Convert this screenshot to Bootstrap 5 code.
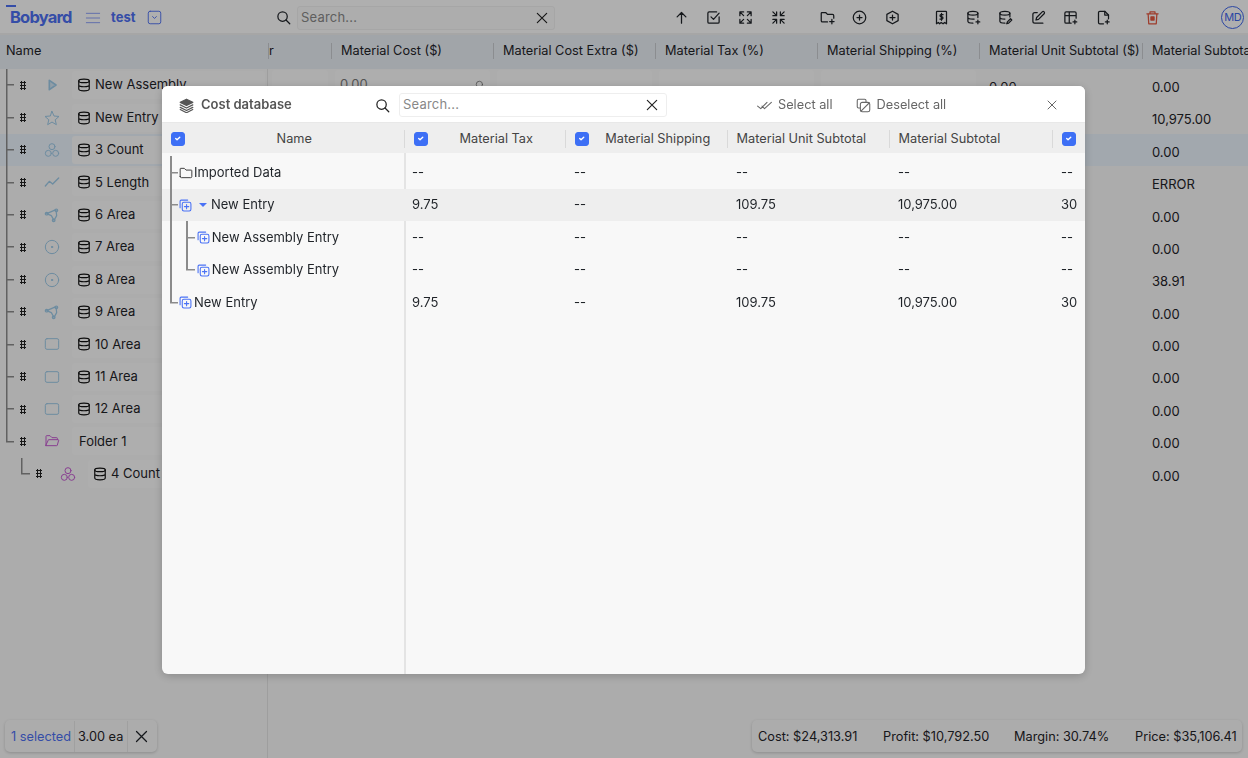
<!DOCTYPE html>
<html lang="en"><head><meta charset="utf-8"><title>Cost database</title>
<link href="https://cdn.jsdelivr.net/npm/bootstrap@5.3.0/dist/css/bootstrap.min.css" rel="stylesheet">
<style>
html,body{height:100%;overflow:hidden}
body{font-family:Inter,"Liberation Sans",sans-serif;font-size:13px;color:#1f2328;background:#f6f6f6}
.ic{width:16px;height:16px;fill:none;stroke:currentColor;stroke-width:2;stroke-linecap:round;stroke-linejoin:round;flex:none}
.page{height:758px;width:1248px;background:linear-gradient(#e2e2e2,#e2e2e2) 267px 0/1px 100% no-repeat #f6f6f6}
.topbar{height:35px;background:#fbfbfb;border-bottom:2px solid #eee;padding:2px 0 0 10px;flex:none}
.logo{font-weight:700;font-size:16.5px;letter-spacing:-.8px;color:#4d6ff0;width:75px;position:relative}
.logo i{position:absolute;left:-4px;top:0;width:10px;height:2px;background:#4d6ff0}
.menu-ic{color:#8d9ff5;margin-right:10px}
.proj{font-weight:700;color:#4d6ff0;width:36px}
.caretbox{color:#4d6ff0;width:15px;height:15px}
.sr-ic{width:15px;height:15px}
.top-s{margin-left:114px;margin-right:6px}
.sbox{background:#fff;border:1px solid #eee;border-radius:3px;height:24px;padding:0 4px 0 3px;color:#888}
.sbox .ph{flex:1;letter-spacing:.2px}
.sbox .ic{color:#222;width:14px;height:14px;margin-right:1px}
.top-in{width:258px;background:#f8f8f8;margin-right:110px;padding-right:4px}
.tool{width:32.4px;display:flex;justify-content:center}
.tool .ic{width:15px;height:15px}
.tgap{margin-left:16.6px}
.trash{color:#e2573f}
.avatar{width:23px;height:23px;border:1.8px solid #3f66ea;border-radius:50%;color:#3f66ea;font-size:11px;letter-spacing:-.4px;margin-left:53px;display:flex;align-items:center;justify-content:center}
.ghead,.grow-r{display:grid;grid-template-columns:268px 63px 162px 162px 162px 162px 163px 110px;width:1254px}
.ghead{height:34px;background:#e7edf3;align-items:center;padding-bottom:2px;font-size:12.75px}
.ghead>div{padding-left:9px;white-space:nowrap;overflow:hidden;position:relative;line-height:16px;border-left:1px solid #c8cbcf}
.ghead>div:first-child{padding-left:6px;border:0}
.ghead>div:nth-child(2){padding-left:0}
.tree{flex:1}
.grow-r{height:32.4px;align-items:center}
.grow-r.hl{background:#e8f1fa}
.ncell{display:flex;align-items:center;height:100%;overflow:hidden;padding-left:6px}
.twg{width:8px;height:100%;flex:none;background:linear-gradient(#8b8b8b,#8b8b8b) 0 0/1.5px 100% no-repeat,linear-gradient(#8b8b8b,#8b8b8b) 0 50%/100% 1.5px no-repeat}
.twg.end{background:linear-gradient(#8b8b8b,#8b8b8b) 0 0/1.5px 50% no-repeat,linear-gradient(#8b8b8b,#8b8b8b) 0 50%/100% 1.5px no-repeat}
.twg.nest{margin-left:15px;width:9px}
.hnd{width:6px;height:9px;margin-left:6px;flex:none;background:radial-gradient(circle,#222 1.1px,transparent 1.3px) 0 0/3px 3px}
.kind{margin-left:18px;margin-right:12px;color:#9dc9e6}
.kind.pur{color:#c45bd0}
.box{flex:1;height:28px;background:#f9f9f9;border-radius:3px;display:flex;align-items:center;padding-left:5px;margin-right:3px;gap:4px;white-space:nowrap;overflow:hidden}
.box .ic{width:14px;height:14px;stroke-width:2;color:#111}
.box.fl{padding-left:7px}
.inp{height:30px;background:#f9f9f9;border-radius:3px;margin:0 3px 0 4px;padding:0 5px;color:#777;display:flex;align-items:center;justify-content:space-between}
.vcell,.c8{padding:5px 0 0 10px}
.c8{grid-column:8}
.foot{height:38px;padding:0 6px 6px 5px;font-size:12.75px}
.pill{height:32px;background:#f7f7f7;border-radius:5px;box-shadow:0 1px 3px rgba(0,0,0,.18);white-space:nowrap;padding-top:1px}
.sel{width:152px;padding-left:6px}
.sel .blu{color:#4d6ff0;line-height:31px;border-right:1px solid #e6e6e6;width:64px}
.sel .qty{padding:0 3px;line-height:31px;border-right:1px solid #e6e6e6;width:53px}
.sel .ic{margin-left:6px;width:15px;height:15px}
.tot{padding-left:6px;width:490px}
.tot .a{width:125px}.tot .b{width:131px}.tot .c{width:121px}
.modal-backdrop{--bs-backdrop-opacity:.3;--bs-backdrop-bg:#000}
.cdlg{max-width:none;width:923px;margin:86px 0 0 162px}
.cdlg .modal-content{height:588px;background:#f8f8f8;border:0;border-radius:6px;overflow:hidden;box-shadow:0 2px 10px rgba(0,0,0,.2)}
.mh{height:37px;background:#fff;border-bottom:1px solid #e8e8e8;padding:2px 0 0 17px;flex:none}
.mh .st{font-weight:600;color:#555;margin-left:7px;width:174px}
.mh .lay{width:15px;height:15px;color:#555}
.mh .sr-ic{margin-right:9px;color:#222}
.m-in{width:268px;margin-right:90px;height:24px}
.mact{color:#666;gap:6px;display:flex;align-items:center;font-size:12.75px}
.mact.one{margin-right:23px}
.mact .ic{width:15px;height:15px;stroke-width:1.7}
.mx{color:#555;width:12px;height:12px;margin-left:100px;stroke-width:1.8}
.mg,.mr{display:grid;flex:none}
.mg{grid-template-columns:242px 161px 162px 162px 163px 33px;height:30px;padding-top:1px;background:#eee;align-items:center;color:#444;font-size:12.75px}
.mr{grid-template-columns:243px 162px 162px 162px 163px 31px}
.mg>div{display:flex;align-items:center;height:18px;border-left:1px solid #d9d9d9;padding-left:8.5px;white-space:nowrap}
.mg>div:first-child{border:0}
.mg .ctr{flex:1;text-align:center}
.form-check-input.ck{width:14px;height:14px;margin:0;flex:none;background-color:#3d6ff5;border-color:#3d6ff5;border-radius:3px;background-size:75%}
.mbody{flex:1;background:linear-gradient(#e4e4e4,#e4e4e4) 242px 0/2px 100% no-repeat;padding-top:3.4px}
.mr{height:32.5px;align-items:center}
.mr.on{background:#eeeeee}
.mr>div{padding-left:7px;white-space:nowrap}
.mr>.mn{padding-left:8px;display:flex;align-items:center;height:100%;margin:0}
.mn .twg{width:9.2px;background-size:2px 100%,8px 1.5px}
.mn .twg.end{background-size:2px 50%,8px 1.5px}
.mn .twg.nest{margin-left:6.8px;width:11px;background-size:2px 100%,9px 1.5px}
.mn .twg.nest.end{background-size:2px 50%,9px 1.5px}
.mn .twg.pass{background-size:2px 100%,0 0}
.blue-i{color:#4a72f5;width:13px;height:13px;stroke-width:2;margin-right:1.8px}
.fold-i{color:#333;width:14px;height:14px;stroke-width:1.6;margin-right:.8px}
.tri{width:0;height:0;border-left:4.500px solid transparent;border-right:4.500px solid transparent;border-top:4.500px solid #4a72f5;margin:0 4px 0 5px}
</style></head><body>
<svg width="0" height="0" class="position-absolute"><defs>
<symbol id="search" viewBox="0 0 24 24"><circle cx="10.5" cy="10.5" r="7.5"/><path d="M16 16l6 6"/></symbol>
<symbol id="x" viewBox="0 0 24 24"><path d="M4 4l16 16M20 4L4 20"/></symbol>
<symbol id="menu" viewBox="0 0 24 24"><path d="M2 5h20M2 12h20M2 19h20"/></symbol>
<symbol id="cbox" viewBox="0 0 24 24"><rect x="2" y="2" width="20" height="20" rx="3"/><path d="M9 10.5l3 3 3-3"/></symbol>
<symbol id="up" viewBox="0 0 24 24"><path d="M12 21V4M5 11l7-7 7 7"/></symbol>
<symbol id="chk" viewBox="0 0 24 24"><path d="M21 11v8a2 2 0 0 1-2 2H5a2 2 0 0 1-2-2V5a2 2 0 0 1 2-2h12"/><path d="M8 11l4 4 9-10"/></symbol>
<symbol id="exp" viewBox="0 0 24 24"><path d="M3 9V3h6M3 3l6 6M21 9V3h-6M21 3l-6 6M3 15v6h6M3 21l6-6M21 15v6h-6M21 21l-6-6"/></symbol>
<symbol id="col" viewBox="0 0 24 24"><path d="M3 3l6 6M9 3v6H3M21 3l-6 6M15 3v6h6M3 21l6-6M9 21v-6H3M21 21l-6-6M15 21v-6h6"/></symbol>
<symbol id="fplus" viewBox="0 0 24 24"><path d="M12 19H4a2 2 0 0 1-2-2V5a1 1 0 0 1 1-1h6l3 3h8a2 2 0 0 1 2 2v4"/><path d="M19 15v7M15.5 18.5h7"/></symbol>
<symbol id="cplus" viewBox="0 0 24 24"><circle cx="12" cy="12" r="10"/><path d="M12 8v8M8 12h8"/></symbol>
<symbol id="hplus" viewBox="0 0 24 24"><path d="M12 2l9 5v10l-9 5-9-5V7z"/><path d="M12 8v8M8 12h8"/></symbol>
<symbol id="rcpt" viewBox="0 0 24 24"><path d="M4 22V3a1 1 0 0 1 1-1h14a1 1 0 0 1 1 1v19l-3-2-2.500 2-3-2-2.500 2-2-2z"/><path d="M14.500 7.500H11a1.800 1.800 0 0 0 0 3.500h2a1.800 1.800 0 0 1 0 3.500H9.500M12 5.500v11"/></symbol>
<symbol id="dbp" viewBox="0 0 24 24"><ellipse cx="11" cy="5" rx="8" ry="3"/><path d="M3 5v13c0 1.700 3.500 3 8 3M19 5v7M3 11.500c0 1.700 3.500 3 8 3h2M19 16v6M16 19h6"/></symbol>
<symbol id="dbe" viewBox="0 0 24 24"><ellipse cx="11" cy="5" rx="8" ry="3"/><path d="M3 5v13c0 1.700 3.500 3 8 3M19 5v6M3 11.500c0 1.700 3.500 3 8 3M14 22l1-3 5-5 2 2-5 5z"/></symbol>
<symbol id="pen" viewBox="0 0 24 24"><path d="M10 4H6a3 3 0 0 0-3 3v11a3 3 0 0 0 3 3h13"/><path d="M8 16l1-4 9-9a2 2 0 0 1 3 3l-9 9z"/></symbol>
<symbol id="tplus" viewBox="0 0 24 24"><path d="M13 21H5a2 2 0 0 1-2-2V5a2 2 0 0 1 2-2h14a2 2 0 0 1 2 2v8M3 9h18M10 3v18"/><path d="M19 16v6M16 19h6"/></symbol>
<symbol id="dplus" viewBox="0 0 24 24"><path d="M12 22H6a2 2 0 0 1-2-2V4a2 2 0 0 1 2-2h8l6 6v6"/><path d="M14 2v6h6M18 16v6M15 19h6"/></symbol>
<symbol id="trash" viewBox="0 0 24 24"><path d="M3 6h18M8 6V3h8v3M5 6l1 16h12l1-16"/><rect x="9.500" y="11" width="5" height="5" fill="currentColor"/></symbol>
<symbol id="db" viewBox="0 0 24 24"><ellipse cx="12" cy="5" rx="9" ry="3"/><path d="M3 5v14c0 1.700 4 3 9 3s9-1.300 9-3V5M3 12c0 1.700 4 3 9 3s9-1.300 9-3"/></symbol>
<symbol id="tri" viewBox="0 0 24 24"><path d="M8 5l10 7-10 7z" fill="currentColor" fill-opacity=".4" stroke-width="2.500"/></symbol>
<symbol id="star" viewBox="0 0 24 24"><path d="M12 2l3 7 7.500.7-5.700 5 1.700 7.300-6.500-3.900L5.500 22l1.700-7.300-5.700-5L9 9z"/></symbol>
<symbol id="three" viewBox="0 0 24 24"><circle cx="12" cy="7" r="4.500"/><circle cx="6.500" cy="17" r="4.500"/><circle cx="17.500" cy="17" r="4.500"/></symbol>
<symbol id="trend" viewBox="0 0 24 24"><path d="M2 18l6-7 5 4 9-9"/></symbol>
<symbol id="poly" viewBox="0 0 24 24"><path d="M4 10l14-6 1 9-4 7-4-7z"/><circle cx="4" cy="10" r="2"/><circle cx="18.500" cy="5" r="2"/><circle cx="14.500" cy="20" r="2"/></symbol>
<symbol id="dot" viewBox="0 0 24 24"><circle cx="12" cy="12" r="10"/><circle cx="12" cy="12" r="1" fill="currentColor"/></symbol>
<symbol id="rct" viewBox="0 0 24 24"><rect x="2" y="4" width="20" height="16" rx="2.500"/></symbol>
<symbol id="fopen" viewBox="0 0 24 24"><path d="M3 19V5a1 1 0 0 1 1-1h5l3 3h7a1 1 0 0 1 1 1v2M3 19h16a1 1 0 0 0 1-1l2-7a1 1 0 0 0-1-1H7a1 1 0 0 0-1 1z"/></symbol>
<symbol id="fold" viewBox="0 0 24 24"><path d="M2 18V5a1 1 0 0 1 1-1h6l3 3h9a1 1 0 0 1 1 1v10a2 2 0 0 1-2 2H4a2 2 0 0 1-2-2z"/></symbol>
<symbol id="asm" viewBox="0 0 24 24"><path d="M2 16V4a2 2 0 0 1 2-2h12"/><rect x="6" y="6" width="16" height="16" rx="3"/><path d="M14 10v8M10 14h8"/></symbol>
<symbol id="lay" viewBox="0 0 24 24"><path d="M12 2l10 5-10 5L2 7z" fill="currentColor"/><path d="M2 11l10 5 10-5M2 15l10 5 10-5M2 18.500l10 5 10-5" stroke-width="2"/></symbol>
<symbol id="dchk" viewBox="0 0 24 24"><path d="M1 13l5 4L16 7M8 13l4 4L23 7"/></symbol>
<symbol id="desel" viewBox="0 0 24 24"><path d="M16 6V4a2 2 0 0 0-2-2H4a2 2 0 0 0-2 2v10a2 2 0 0 0 2 2h2"/><rect x="7" y="7" width="15" height="15" rx="3"/><path d="M8 21L21 8"/></symbol>
</defs></svg>

<div class="page d-flex flex-column">
  <div class="topbar d-flex align-items-center">
    <div class="logo"><i></i>Bobyard</div>
    <svg class="ic menu-ic" style="stroke-width:1.500"><use href="#menu"/></svg>
    <div class="proj">test</div>
    <svg class="ic caretbox" style="stroke-width:1.500"><use href="#cbox"/></svg>
    <svg class="ic sr-ic top-s"><use href="#search"/></svg>
    <div class="sbox top-in d-flex align-items-center"><span class="ph">Search...</span><svg class="ic"><use href="#x"/></svg></div>
    <div class="tool"><svg class="ic"><use href="#up"/></svg></div>
    <div class="tool"><svg class="ic"><use href="#chk"/></svg></div>
    <div class="tool"><svg class="ic"><use href="#exp"/></svg></div>
    <div class="tool"><svg class="ic"><use href="#col"/></svg></div>
    <div class="tool tgap"><svg class="ic"><use href="#fplus"/></svg></div>
    <div class="tool"><svg class="ic"><use href="#cplus"/></svg></div>
    <div class="tool"><svg class="ic"><use href="#hplus"/></svg></div>
    <div class="tool tgap"><svg class="ic"><use href="#rcpt"/></svg></div>
    <div class="tool"><svg class="ic"><use href="#dbp"/></svg></div>
    <div class="tool"><svg class="ic"><use href="#dbe"/></svg></div>
    <div class="tool"><svg class="ic"><use href="#pen"/></svg></div>
    <div class="tool"><svg class="ic"><use href="#tplus"/></svg></div>
    <div class="tool"><svg class="ic"><use href="#dplus"/></svg></div>
    <div class="tool tgap trash"><svg class="ic"><use href="#trash"/></svg></div>
    <div class="avatar">MD</div>
  </div>
  <div class="ghead">
    <div>Name</div><div>r</div><div>Material Cost ($)</div><div>Material Cost Extra ($)</div><div>Material Tax (%)</div><div>Material Shipping (%)</div><div>Material Unit Subtotal ($)</div><div>Material Subtotal ($)</div>
  </div>
  <div class="tree">
    <div class="grow-r"><div class="ncell"><span class="twg"></span><span class="hnd"></span><svg class="ic kind"><use href="#tri"/></svg><div class="box"><svg class="ic"><use href="#db"/></svg>New Assembly</div></div><div class="inp"></div><div class="inp">0.00<svg class="ic" style="width:10px;height:10px"><use href="#search"/></svg></div><div class="inp"></div><div class="inp"></div><div class="inp"></div><div class="vcell">0.00</div><div class="vcell">0.00</div></div>
    <div class="grow-r"><div class="ncell"><span class="twg"></span><span class="hnd"></span><svg class="ic kind" style="stroke-width:1.500"><use href="#star"/></svg><div class="box"><svg class="ic"><use href="#db"/></svg>New Entry</div></div><div class="c8">10,975.00</div></div>
    <div class="grow-r hl"><div class="ncell"><span class="twg"></span><span class="hnd"></span><svg class="ic kind" style="stroke-width:1.500"><use href="#three"/></svg><div class="box"><svg class="ic"><use href="#db"/></svg>3 Count</div></div><div class="c8">0.00</div></div>
    <div class="grow-r"><div class="ncell"><span class="twg"></span><span class="hnd"></span><svg class="ic kind"><use href="#trend"/></svg><div class="box"><svg class="ic"><use href="#db"/></svg>5 Length</div></div><div class="c8">ERROR</div></div>
    <div class="grow-r"><div class="ncell"><span class="twg"></span><span class="hnd"></span><svg class="ic kind" style="stroke-width:1.800"><use href="#poly"/></svg><div class="box"><svg class="ic"><use href="#db"/></svg>6 Area</div></div><div class="c8">0.00</div></div>
    <div class="grow-r"><div class="ncell"><span class="twg"></span><span class="hnd"></span><svg class="ic kind" style="stroke-width:1.500"><use href="#dot"/></svg><div class="box"><svg class="ic"><use href="#db"/></svg>7 Area</div></div><div class="c8">0.00</div></div>
    <div class="grow-r"><div class="ncell"><span class="twg"></span><span class="hnd"></span><svg class="ic kind" style="stroke-width:1.500"><use href="#dot"/></svg><div class="box"><svg class="ic"><use href="#db"/></svg>8 Area</div></div><div class="c8">38.91</div></div>
    <div class="grow-r"><div class="ncell"><span class="twg"></span><span class="hnd"></span><svg class="ic kind" style="stroke-width:1.800"><use href="#poly"/></svg><div class="box"><svg class="ic"><use href="#db"/></svg>9 Area</div></div><div class="c8">0.00</div></div>
    <div class="grow-r"><div class="ncell"><span class="twg"></span><span class="hnd"></span><svg class="ic kind" style="stroke-width:1.500"><use href="#rct"/></svg><div class="box"><svg class="ic"><use href="#db"/></svg>10 Area</div></div><div class="c8">0.00</div></div>
    <div class="grow-r"><div class="ncell"><span class="twg"></span><span class="hnd"></span><svg class="ic kind" style="stroke-width:1.500"><use href="#rct"/></svg><div class="box"><svg class="ic"><use href="#db"/></svg>11 Area</div></div><div class="c8">0.00</div></div>
    <div class="grow-r"><div class="ncell"><span class="twg"></span><span class="hnd"></span><svg class="ic kind" style="stroke-width:1.500"><use href="#rct"/></svg><div class="box"><svg class="ic"><use href="#db"/></svg>12 Area</div></div><div class="c8">0.00</div></div>
    <div class="grow-r"><div class="ncell"><span class="twg end"></span><span class="hnd"></span><svg class="ic kind pur" style="stroke-width:1.500"><use href="#fopen"/></svg><div class="box fl">Folder 1</div></div><div class="c8">0.00</div></div>
    <div class="grow-r"><div class="ncell"><span class="twg end nest"></span><span class="hnd"></span><svg class="ic kind pur" style="stroke-width:1.500"><use href="#three"/></svg><div class="box"><svg class="ic"><use href="#db"/></svg>4 Count</div></div><div class="c8">0.00</div></div>
  </div>
  <div class="foot d-flex justify-content-between align-items-start">
    <div class="pill sel d-flex align-items-center"><span class="blu">1 selected</span><span class="qty">3.00 ea</span><svg class="ic"><use href="#x"/></svg></div>
    <div class="pill tot d-flex align-items-center"><span class="a">Cost: $24,313.91</span><span class="b">Profit: $10,792.50</span><span class="c">Margin: 30.74%</span><span>Price: $35,106.41</span></div>
  </div>
</div>

<div class="modal-backdrop show"></div>
<div class="modal d-block" role="dialog">
  <div class="modal-dialog cdlg">
    <div class="modal-content d-flex flex-column">
      <div class="mh d-flex align-items-center">
        <svg class="ic lay"><use href="#lay"/></svg>
        <span class="st">Cost database</span>
        <svg class="ic sr-ic"><use href="#search"/></svg>
        <div class="sbox m-in d-flex align-items-center"><span class="ph">Search...</span><svg class="ic" style="margin-right:3px"><use href="#x"/></svg></div>
        <div class="mact one"><svg class="ic"><use href="#dchk"/></svg>Select all</div>
        <div class="mact"><svg class="ic"><use href="#desel"/></svg>Deselect all</div>
        <svg class="ic mx"><use href="#x"/></svg>
      </div>
      <div class="mg">
        <div><input class="form-check-input ck" type="checkbox" checked aria-label="Name"><span class="ctr">Name</span></div>
        <div><input class="form-check-input ck" type="checkbox" checked aria-label="Material Tax"><span class="ctr">Material Tax</span></div>
        <div><input class="form-check-input ck" type="checkbox" checked aria-label="Material Shipping"><span class="ctr">Material Shipping</span></div>
        <div>Material Unit Subtotal</div>
        <div>Material Subtotal</div>
        <div><input class="form-check-input ck" type="checkbox" checked aria-label="More"></div>
      </div>
      <div class="mbody">
        <div class="mr"><div class="mn"><span class="twg"></span><svg class="ic fold-i"><use href="#fold"/></svg>Imported Data</div><div>--</div><div>--</div><div>--</div><div>--</div><div>--</div></div>
        <div class="mr on"><div class="mn"><span class="twg"></span><svg class="ic blue-i"><use href="#asm"/></svg><span class="tri"></span>New Entry</div><div>9.75</div><div>--</div><div>109.75</div><div>10,975.00</div><div>30</div></div>
        <div class="mr"><div class="mn"><span class="twg pass"></span><span class="twg nest"></span><svg class="ic blue-i"><use href="#asm"/></svg>New Assembly Entry</div><div>--</div><div>--</div><div>--</div><div>--</div><div>--</div></div>
        <div class="mr"><div class="mn"><span class="twg pass"></span><span class="twg nest end"></span><svg class="ic blue-i"><use href="#asm"/></svg>New Assembly Entry</div><div>--</div><div>--</div><div>--</div><div>--</div><div>--</div></div>
        <div class="mr"><div class="mn"><span class="twg end"></span><svg class="ic blue-i"><use href="#asm"/></svg>New Entry</div><div>9.75</div><div>--</div><div>109.75</div><div>10,975.00</div><div>30</div></div>
      </div>
    </div>
  </div>
</div>
<script src="https://cdn.jsdelivr.net/npm/bootstrap@5.3.0/dist/js/bootstrap.bundle.min.js"></script>
</body></html>
